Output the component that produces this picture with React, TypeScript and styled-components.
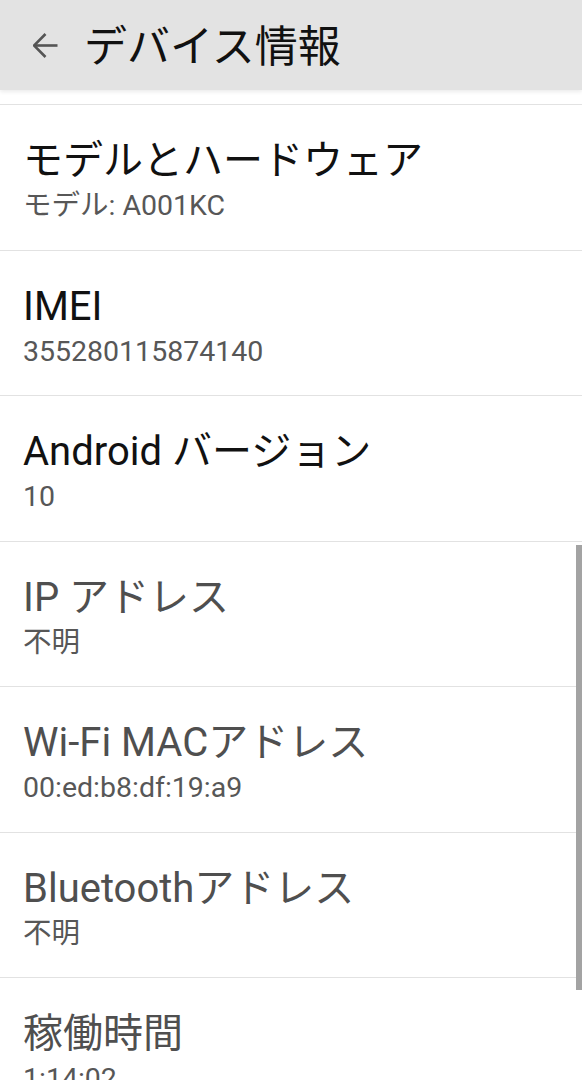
import React from 'react';
import styled, { createGlobalStyle } from 'styled-components';

const GlobalStyle = createGlobalStyle`
  html, body {
    margin: 0;
    padding: 0;
    background: #ffffff;
  }
  body {
    font-family: Roboto, "Noto Sans CJK JP", "Noto Sans", sans-serif;
    -webkit-font-smoothing: antialiased;
  }
`;

const Screen = styled.div`
  width: 582px;
  height: 1080px;
  display: flex;
  flex-direction: column;
  overflow: hidden;
  background: #ffffff;
`;

const Toolbar = styled.header`
  flex: 0 0 90px;
  display: flex;
  align-items: center;
  padding-left: 33px;
  background: #e3e3e3;
  box-shadow: 0 2px 4px rgba(0, 0, 0, 0.08);
  position: relative;
  z-index: 1;
`;

const BackButton = styled.button`
  display: flex;
  align-items: center;
  justify-content: center;
  width: 25px;
  height: 25px;
  padding: 0;
  border: none;
  background: transparent;
`;

const Title = styled.h1`
  margin: 3px 0 0 26px;
  font-size: 43px;
  font-weight: 400;
  line-height: 50px;
  color: #111111;
`;

const ListArea = styled.div`
  position: relative;
  flex: 1;
  overflow: hidden;
  padding-top: 14px;
`;

const Item = styled.div`
  height: 145.5px;
  box-sizing: border-box;
  border-top: 1.5px solid #e2e2e2;
  padding: 32px 0 0 23px;
`;

const ItemTitle = styled.div<{ $disabled?: boolean }>`
  font-size: 40px;
  line-height: 48px;
  color: ${(p) => (p.$disabled ? '#4f4f4f' : '#111111')};
  white-space: nowrap;
`;

const ItemSummary = styled.div`
  margin-top: 4px;
  font-size: 28.5px;
  line-height: 34px;
  color: #575757;
  white-space: nowrap;
`;

const ScrollThumb = styled.div`
  position: absolute;
  right: 0;
  top: 455px;
  width: 6px;
  height: 445px;
  background: #a3a3a3;
`;

const BackArrow = () => (
  <svg width="25" height="25" viewBox="0 0 25 25" fill="none">
    <path d="M1 12.5H24.5" stroke="#555555" strokeWidth="2.6" />
    <path
      d="M12.5 1L1 12.5L12.5 24"
      stroke="#555555"
      strokeWidth="2.6"
      strokeLinejoin="miter"
    />
  </svg>
);

const items = [
  { title: 'モデルとハードウェア', summary: 'モデル: A001KC' },
  { title: 'IMEI', summary: '355280115874140' },
  { title: 'Android バージョン', summary: '10' },
  { title: 'IP アドレス', summary: '不明', disabled: true },
  { title: 'Wi-Fi MACアドレス', summary: '00:ed:b8:df:19:a9', disabled: true },
  { title: 'Bluetoothアドレス', summary: '不明', disabled: true },
  { title: '稼働時間', summary: '1:14:02', disabled: true },
];

const App = () => {
  return (
    <>
      <GlobalStyle />
      <Screen>
        <Toolbar>
          <BackButton aria-label="戻る">
            <BackArrow />
          </BackButton>
          <Title>デバイス情報</Title>
        </Toolbar>
        <ListArea>
          {items.map((item) => (
            <Item key={item.title}>
              <ItemTitle $disabled={item.disabled}>{item.title}</ItemTitle>
              <ItemSummary>{item.summary}</ItemSummary>
            </Item>
          ))}
          <ScrollThumb />
        </ListArea>
      </Screen>
    </>
  );
};

export default App;
